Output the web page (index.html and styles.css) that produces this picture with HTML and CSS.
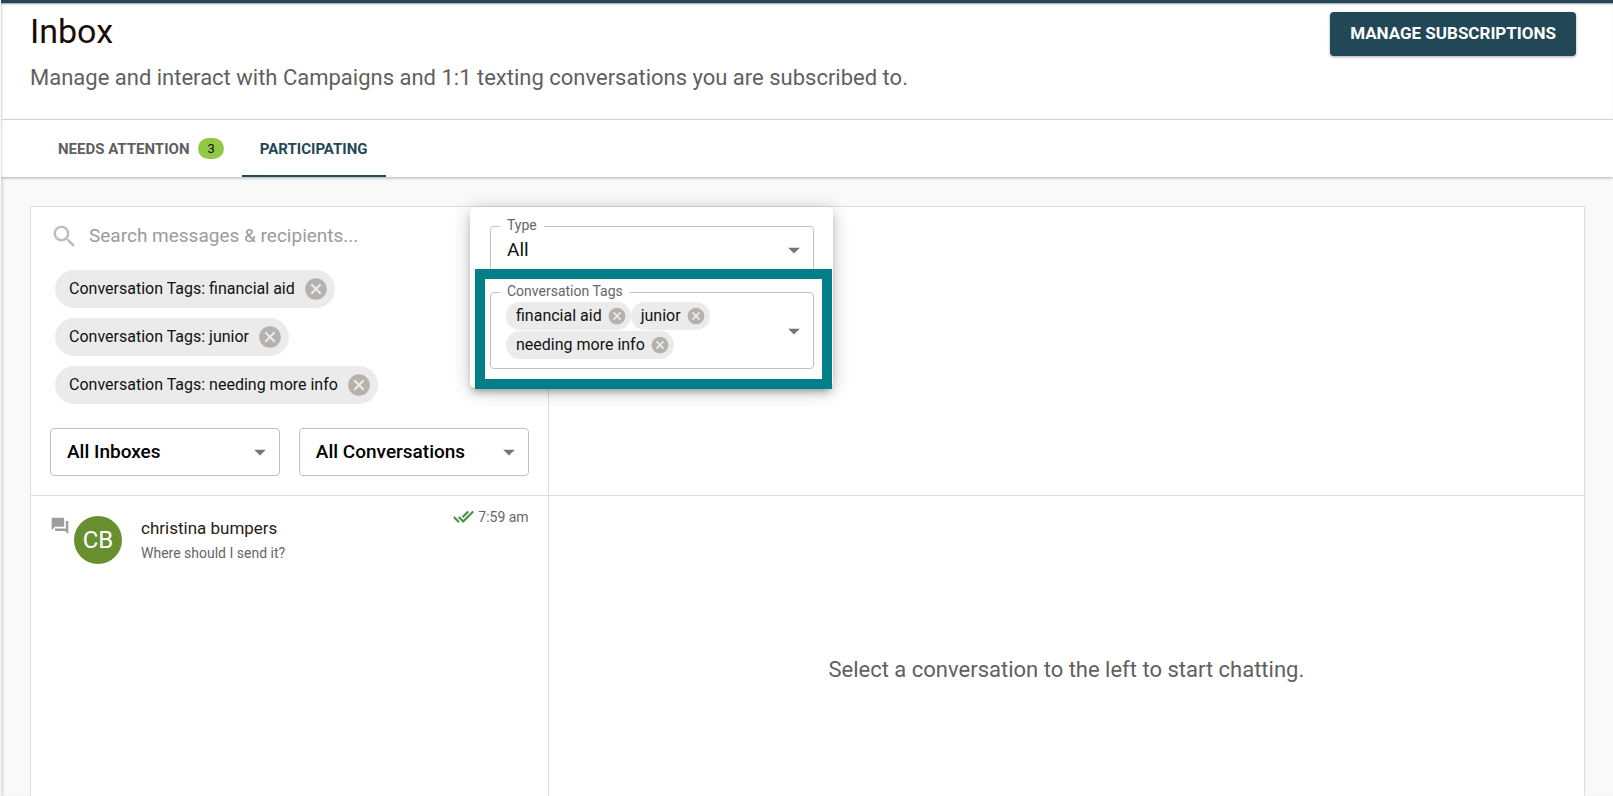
FILE: index.html
```html
<!DOCTYPE html>
<html lang="en">
<head>
<meta charset="utf-8">
<title>Inbox</title>
<link rel="stylesheet" href="styles.css">
</head>
<body>
<svg class="sprite" aria-hidden="true">
  <symbol id="cancel" viewBox="0 0 24 24"><path d="M12 2C6.470 2 2 6.470 2 12s4.470 10 10 10 10-4.470 10-10S17.530 2 12 2zm5 13.590L15.590 17 12 13.410 8.410 17 7 15.590 10.590 12 7 8.410 8.410 7 12 10.590 15.590 7 17 8.410 13.410 12 17 15.590z"/></symbol>
  <symbol id="arrow" viewBox="0 0 24 24"><path d="M7 10l5 5 5-5z"/></symbol>
</svg>
<div class="app">
  <header class="page-header">
    <div>
      <h1 class="title">Inbox</h1>
      <p class="subtitle">Manage and interact with Campaigns and 1:1 texting conversations you are subscribed to.</p>
    </div>
    <button class="manage" type="button">MANAGE SUBSCRIPTIONS</button>
  </header>
  <nav class="tabs" role="tablist">
    <button class="tab" type="button" role="tab">NEEDS ATTENTION <span class="badge">3</span></button>
    <button class="tab tab-active" type="button" role="tab" aria-selected="true">PARTICIPATING</button>
  </nav>
  <main class="content">
    <section class="filters">
      <div class="search">
        <svg class="search-icon" viewBox="0 0 24 24" aria-hidden="true"><path d="M15.500 14h-.79l-.28-.27C15.410 12.590 16 11.110 16 9.500 16 5.910 13.090 3 9.500 3S3 5.910 3 9.500 5.910 16 9.500 16c1.610 0 3.090-.59 4.230-1.570l.27.28v.79l5 4.990L20.490 19l-4.990-5zm-6 0C7.010 14 5 11.990 5 9.500S7.010 5 9.500 5 14 7.010 14 9.500 11.990 14 9.500 14z"/></svg>
        <input class="search-input" type="text" aria-label="Search" placeholder="Search messages &amp; recipients...">
      </div>
      <div class="chips">
        <div class="chip">Conversation Tags: financial aid<button class="remove" type="button" aria-label="Remove financial aid"><svg><use href="#cancel"/></svg></button></div>
        <div class="chip">Conversation Tags: junior<button class="remove" type="button" aria-label="Remove junior"><svg><use href="#cancel"/></svg></button></div>
        <div class="chip">Conversation Tags: needing more info<button class="remove" type="button" aria-label="Remove needing more info"><svg><use href="#cancel"/></svg></button></div>
      </div>
      <div class="selects">
        <div class="field">
          <select class="select select-strong" aria-label="Inbox"><option>All Inboxes</option></select>
          <svg class="arrow" aria-hidden="true"><use href="#arrow"/></svg>
        </div>
        <div class="field">
          <select class="select select-strong" aria-label="Conversations"><option>All Conversations</option></select>
          <svg class="arrow" aria-hidden="true"><use href="#arrow"/></svg>
        </div>
      </div>
      <div class="popup">
        <div class="field">
          <label class="label" for="type">Type</label>
          <select class="select" id="type"><option>All</option></select>
          <svg class="arrow" aria-hidden="true"><use href="#arrow"/></svg>
        </div>
        <div class="field">
          <span class="label" id="tags-label">Conversation Tags</span>
          <div class="tags" role="group" aria-labelledby="tags-label">
            <div class="chip chip-small">financial aid<button class="remove" type="button" aria-label="Remove financial aid"><svg><use href="#cancel"/></svg></button></div>
            <div class="chip chip-small">junior<button class="remove" type="button" aria-label="Remove junior"><svg><use href="#cancel"/></svg></button></div>
            <div class="chip chip-small">needing more info<button class="remove" type="button" aria-label="Remove needing more info"><svg><use href="#cancel"/></svg></button></div>
          </div>
          <svg class="arrow" aria-hidden="true"><use href="#arrow"/></svg>
          <div class="highlight"></div>
        </div>
      </div>
    </section>
    <section class="thread-header"></section>
    <section class="list">
      <article class="conversation">
        <div class="person">
          <svg class="forum" viewBox="0 0 24 24" aria-hidden="true"><path d="M21 6h-2v9H6v2c0 .55.45 1 1 1h11l4 4V7c0-.55-.45-1-1-1zm-4 6V3c0-.55-.45-1-1-1H3c-.55 0-1 .45-1 1v14l4-4h10c.55 0 1-.45 1-1z"/></svg>
          <div class="avatar">CB</div>
          <div class="summary">
            <h2 class="name">christina bumpers</h2>
            <p class="preview">Where should I send it?</p>
          </div>
        </div>
        <div class="meta">
          <svg class="ticks" viewBox="0 0 24 24" aria-hidden="true"><path d="M18 7l-1.410-1.410-6.340 6.340 1.410 1.410L18 7zm4.240-1.410L11.660 16.170 7.480 12l-1.410 1.410L11.660 19l12-12-1.420-1.410zM.41 13.410L6 19l1.410-1.410L1.830 12 .41 13.410z"/></svg>
          <time>7:59 am</time>
        </div>
      </article>
    </section>
    <section class="thread">Select a conversation to the left to start chatting.</section>
  </main>
</div>
</body>
</html>
```
FILE: styles.css
```css
* { box-sizing: border-box; }

body {
  margin: 0;
  background: #f9f9f9;
  color: #111;
  font-family: Roboto, "Liberation Sans", sans-serif;
  font-size: 16px;
}

button, input, select { font: inherit; color: inherit; }
button { border: 0; padding: 0; background: none; cursor: pointer; }
h1, h2, p { margin: 0; font-weight: 400; }
.sprite { position: absolute; width: 0; height: 0; }

.app {
  display: flex;
  flex-direction: column;
  height: 100vh;
  margin-left: 1px;
  overflow: hidden;
  border-top: 3px solid #224757;
  box-shadow: inset 3px 0 3px -1px rgba(0, 0, 0, 0.12);
}

.page-header {
  display: flex;
  justify-content: space-between;
  align-items: flex-start;
  flex: none;
  height: 117px;
  padding: 8px 37px 0 29px;
  border-bottom: 1px solid #dedede;
  background: #fff;
  box-shadow: inset 0 2px 2px -1px rgba(0, 0, 0, 0.4), inset 2px 0 2px -1px rgba(0, 0, 0, 0.15);
}

.title { font-size: 34px; line-height: 40px; color: #1b0c06; }
.subtitle { margin-top: 11px; font-size: 22px; line-height: 32px; color: #5f5f5f; }

.manage {
  height: 44px;
  margin-top: 1px;
  padding: 0 20px 2px;
  border-radius: 4px;
  background: #224757;
  color: #fff;
  font-size: 17px;
  font-weight: 700;
  box-shadow: 0 1px 3px rgba(0, 0, 0, 0.35);
}

.tabs {
  position: relative;
  display: flex;
  flex: none;
  height: 57px;
  padding-left: 39px;
  background: #fff;
  box-shadow: 0 1px 3px rgba(0, 0, 0, 0.3), inset 2px 0 2px -1px rgba(0, 0, 0, 0.15);
}

.tab {
  display: flex;
  align-items: center;
  gap: 9px;
  padding: 2px 18px 0;
  border-bottom: 2px solid transparent;
  color: #5f5f5f;
  font-size: 15px;
  font-weight: 700;
}
.tab-active { border-color: #224757; color: #224757; }

.badge {
  padding: 0 9px;
  border-radius: 11px;
  background: #93c847;
  color: #111;
  font-size: 13px;
  font-weight: 400;
  line-height: 21px;
}

.content {
  position: relative;
  display: grid;
  grid-template-columns: 1fr 2fr;
  grid-template-rows: auto 1fr;
  flex: 1;
  margin: 29px 28px 0 29px;
  border: 1px solid #dedede;
  border-bottom: 0;
  background: #fff;
}

.filters, .thread-header { border-bottom: 1px solid #dedede; }
.filters, .list { border-right: 1px solid #dedede; }
.filters { position: relative; padding: 9px 19px 19px; }

.search { display: flex; align-items: center; gap: 10px; height: 40px; }
.search-icon { width: 29px; height: 29px; fill: #bdbdbd; }
.search-input {
  flex: 1;
  min-width: 0;
  padding: 0 0 2px;
  border: 0;
  outline: 0;
  background: none;
  font-size: 19px;
}
.search-input::placeholder { color: #9b9b9b; opacity: 1; }

.chips {
  display: flex;
  flex-direction: column;
  align-items: flex-start;
  gap: 10px;
  margin: 14px 5px 24px;
}

.chip {
  display: flex;
  align-items: center;
  gap: 8px;
  height: 38px;
  padding: 0 6px 0 14px;
  border-radius: 19px;
  background: #ebebeb;
  color: #111;
  font-size: 16px;
  line-height: 18px;
}
.remove { display: flex; fill: #b5b1ac; }
.remove svg { width: 26px; height: 26px; }

.chip-small { gap: 5px; height: 28px; padding: 0 4px 0 10px; border-radius: 14px; }
.chip-small .remove svg { width: 20px; height: 20px; }

.selects { display: grid; grid-template-columns: 1fr 1fr; gap: 19px; }

.field {
  position: relative;
  min-height: 48px;
  border: 1px solid #c2c2c2;
  border-radius: 4px;
}
.select {
  display: block;
  width: 100%;
  height: 46px;
  padding: 0 40px 2px 16px;
  border: 0;
  outline: 0;
  background: none;
  appearance: none;
  font-size: 19px;
}
.select-strong { font-weight: 500; color: #000; }
.arrow {
  position: absolute;
  top: calc(50% - 14px);
  right: 5px;
  width: 28px;
  height: 28px;
  fill: #757575;
  pointer-events: none;
}
.label {
  position: absolute;
  top: -11px;
  left: 9px;
  padding: 0 7px;
  background: #fff;
  color: #666;
  font-size: 14px;
  line-height: 18px;
}

.popup {
  position: absolute;
  top: 0;
  left: 439px;
  z-index: 2;
  display: grid;
  gap: 18px;
  width: 363px;
  padding: 19px 19px 19px 20px;
  border-radius: 5px;
  background: #fff;
  box-shadow: 0 6px 7px -3px rgba(0, 0, 0, 0.3), 0 3px 18px rgba(0, 0, 0, 0.25);
}
.tags { display: flex; flex-wrap: wrap; row-gap: 1px; padding: 9px 60px 9px 15px; }
.highlight {
  position: absolute;
  inset: -24px -19px -21px -16px;
  border: 10px solid #007f89;
  pointer-events: none;
}

.conversation { display: flex; align-items: flex-start; padding: 10px 19px; }
.person { display: flex; align-items: flex-start; flex: 1; padding-top: 10px; }
.forum { width: 20px; height: 20px; fill: #9e9e9e; }
.avatar {
  display: grid;
  place-items: center;
  width: 48px;
  height: 48px;
  margin-left: 4px;
  border-radius: 50%;
  background: #688f2f;
  color: #fff;
  font-size: 24px;
}
.summary { flex: 1; margin-left: 19px; }
.name { font-size: 17px; line-height: 24px; color: #2b1a14; }
.preview { font-size: 14px; line-height: 26px; color: #666; }
.meta { display: flex; align-items: center; gap: 4px; font-size: 14px; line-height: 20px; color: #666; }
.ticks { width: 21px; height: 21px; fill: #3f8f3f; stroke: #3f8f3f; stroke-width: 0.5; }

.thread {
  padding: 158px 20px 0;
  color: #5f5f5f;
  font-size: 22px;
  line-height: 32px;
  text-align: center;
}
```
